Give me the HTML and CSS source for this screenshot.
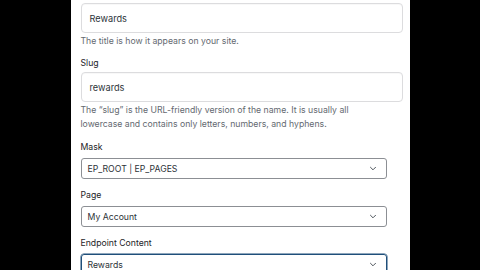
FILE: index.html
```html
<!DOCTYPE html>
<html>
<head>
<meta charset="utf-8">
<link rel="stylesheet" href="styles.css">
</head>
<body>
<div class="page">
  <div class="text-input">Rewards</div>
  <p class="desc desc-first">The title is how it appears on your site.</p>

  <div class="label label-slug">Slug</div>
  <div class="text-input">rewards</div>
  <p class="desc">The “slug” is the URL-friendly version of the name. It is usually all lowercase and contains only letters, numbers, and hyphens.</p>

  <div class="label label-select label-mask">Mask</div>
  <div class="select">
    <span>EP_ROOT | EP_PAGES</span>
    <svg class="chev" width="8" height="5" viewBox="0 0 8 5"><polyline points="1.2,1 4,3.8 6.8,1" fill="none" stroke="#50575e" stroke-width="1"/></svg>
  </div>

  <div class="label label-select">Page</div>
  <div class="select">
    <span>My Account</span>
    <svg class="chev" width="8" height="5" viewBox="0 0 8 5"><polyline points="1.2,1 4,3.8 6.8,1" fill="none" stroke="#50575e" stroke-width="1"/></svg>
  </div>

  <div class="label label-select">Endpoint Content</div>
  <div class="select focused">
    <span>Rewards</span>
    <svg class="chev" width="8" height="5" viewBox="0 0 8 5"><polyline points="1.2,1 4,3.8 6.8,1" fill="none" stroke="#50575e" stroke-width="1"/></svg>
  </div>
</div>
</body>
</html>
```

FILE: styles.css
```css
html, body {
  margin: 0;
  padding: 0;
  background: #000;
  height: 270px;
  overflow: hidden;
}

.page {
  width: 339px;
  height: 270px;
  margin: 0 auto;
  background: #fff;
  box-sizing: border-box;
  padding: 3px 7px 0 10px;
  font-family: Inter, "Liberation Sans", sans-serif;
  font-size: 8.7px;
  color: #1d2327;
  overflow: hidden;
}

.text-input {
  height: 30px;
  box-sizing: border-box;
  border: 1px solid #dcdcde;
  border-radius: 4px;
  box-shadow: inset 0 1px 1px rgba(0,0,0,0.03);
  padding: 0 8px;
  display: flex;
  align-items: center;
  font-size: 9.2px;
  color: #2c3338;
}

.desc {
  margin: 1px 0 0 0;
  max-width: 306px;
  line-height: 14px;
  color: #646970;
}

.label {
  line-height: 14px;
  color: #1d2327;
}

.label-slug {
  margin: 8px 0 2px 0;
}

.label-select {
  margin: 9px 0 4px 0;
}

.select {
  width: 306px;
  height: 21px;
  box-sizing: border-box;
  border: 1px solid #8c8f94;
  border-radius: 3px;
  padding: 0 9px 0 6px;
  display: flex;
  align-items: center;
  justify-content: space-between;
  color: #2c3338;
}

.select.focused {
  border-color: #1f4f7a;
  box-shadow: 0 0 0 0.5px #1f4f7a;
}

.chev {
  display: block;
}
```
